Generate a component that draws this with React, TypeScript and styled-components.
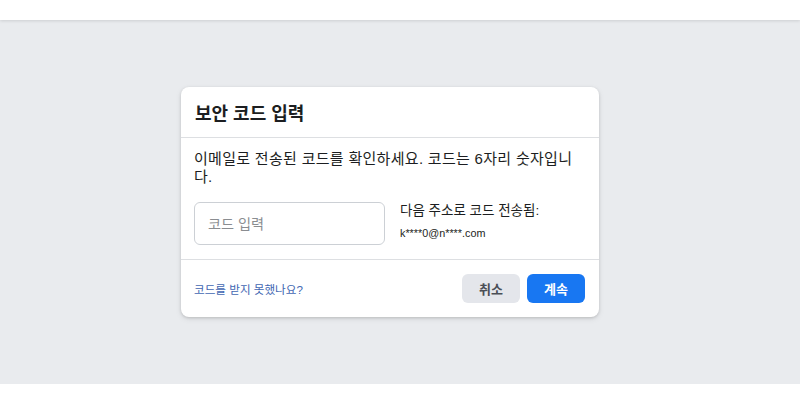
import styled, { createGlobalStyle } from 'styled-components';

const GlobalStyle = createGlobalStyle`
  body {
    margin: 0;
    background: #ffffff;
    font-family: "Liberation Sans", "Noto Sans CJK KR", sans-serif;
    color: #1c1e21;
  }
`;

const TopBar = styled.div`
  height: 20px;
  background: #ffffff;
  box-shadow: 0 1px 3px rgba(0, 0, 0, 0.12);
  position: relative;
  z-index: 1;
`;

const Stage = styled.div`
  height: 364px;
  background: #e9ebee;
  display: flex;
  align-items: center;
  justify-content: center;
  padding-right: 20px;
`;

const Card = styled.div`
  width: 418px;
  background: #ffffff;
  border-radius: 8px;
  box-shadow: 0 1px 3px rgba(0, 0, 0, 0.15), 0 2px 6px rgba(0, 0, 0, 0.08);
  overflow: hidden;
`;

const Header = styled.div`
  height: 50px;
  display: flex;
  align-items: center;
  padding: 0 14px;
  border-bottom: 1px solid #dddfe2;
`;

const Title = styled.h2`
  margin: 0;
  font-size: 18px;
  font-weight: 700;
  color: #1c1e21;
`;

const Body = styled.div`
  padding: 12px 14px 14px 13px;
  border-bottom: 1px solid #dddfe2;
`;

const Intro = styled.p`
  margin: 0 0 17px;
  font-size: 15px;
  letter-spacing: 0.3px;
  line-height: 17.5px;
  color: #1c1e21;
`;

const Row = styled.div`
  display: flex;
  align-items: flex-start;
  gap: 15px;
`;

const CodeInput = styled.input`
  box-sizing: border-box;
  width: 191px;
  height: 43px;
  padding: 0 13px;
  border: 1px solid #ccd0d5;
  border-radius: 6px;
  font-family: inherit;
  font-size: 14.2px;
  color: #1c1e21;
  outline: none;

  &::placeholder {
    color: #8a8d91;
  }
`;

const Info = styled.div`
  display: flex;
  flex-direction: column;
  gap: 7px;
`;

const InfoLabel = styled.div`
  font-size: 13.5px;
  line-height: 17px;
  color: #1c1e21;
`;

const Email = styled.div`
  font-size: 10.8px;
  line-height: 14px;
  color: #1c1e21;
`;

const Footer = styled.div`
  display: flex;
  align-items: center;
  justify-content: space-between;
  padding: 14px 14px 14px 13px;
`;

const HelpLink = styled.a`
  font-size: 11.6px;
  color: #4267b2;
  text-decoration: none;
  cursor: pointer;
`;

const Actions = styled.div`
  display: flex;
  gap: 7px;
`;

const Button = styled.button<{ $primary?: boolean }>`
  width: 58px;
  height: 29px;
  border: none;
  border-radius: 6px;
  font-family: inherit;
  font-size: 13px;
  font-weight: 700;
  cursor: pointer;
  background: ${p => (p.$primary ? '#1877f2' : '#e4e6eb')};
  color: ${p => (p.$primary ? '#ffffff' : '#4b4f56')};
`;

const App = () => {
  return (
    <>
      <GlobalStyle />
      <TopBar />
      <Stage>
        <Card>
          <Header>
            <Title>보안 코드 입력</Title>
          </Header>
          <Body>
            <Intro>이메일로 전송된 코드를 확인하세요. 코드는 6자리 숫자입니다.</Intro>
            <Row>
              <CodeInput type="text" placeholder="코드 입력" />
              <Info>
                <InfoLabel>다음 주소로 코드 전송됨:</InfoLabel>
                <Email>k****0@n****.com</Email>
              </Info>
            </Row>
          </Body>
          <Footer>
            <HelpLink>코드를 받지 못했나요?</HelpLink>
            <Actions>
              <Button>취소</Button>
              <Button $primary>계속</Button>
            </Actions>
          </Footer>
        </Card>
      </Stage>
    </>
  );
};

export default App;
